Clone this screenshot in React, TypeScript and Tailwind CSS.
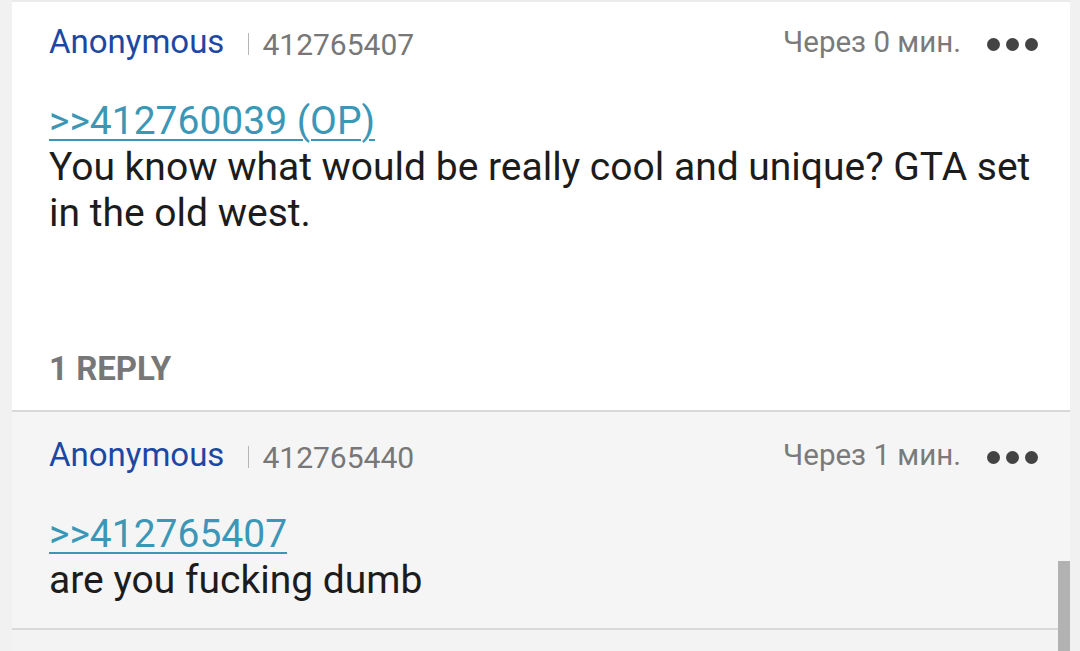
const posts = [
  {
    id: "412765407",
    time: "Через 0 мин.",
    quote: ">>412760039 (OP)",
    body: "You know what would be really cool and unique? GTA set in the old west.",
    replies: "1 REPLY",
    bg: "bg-white",
    pt: "pt-[20px]",
  },
  {
    id: "412765440",
    time: "Через 1 мин.",
    quote: ">>412765407",
    body: "are you fucking dumb",
    replies: "",
    bg: "bg-[#f5f5f5]",
    pt: "pt-[23px]",
  },
];

function Dots() {
  return (
    <div className="flex items-center gap-[6px] mt-[2px] h-[40px]">
      <span className="w-[13px] h-[13px] rounded-full bg-[#434343]" />
      <span className="w-[13px] h-[13px] rounded-full bg-[#434343]" />
      <span className="w-[13px] h-[13px] rounded-full bg-[#434343]" />
    </div>
  );
}

export default function App() {
  return (
    <div
      className="relative w-[1080px] h-[651px] overflow-hidden bg-[#f1f1f1] pl-[12px] pr-[10px]"
      style={{ fontFamily: "Roboto, 'Noto Sans', sans-serif" }}
    >
      <div className="w-[1058px] border-t-2 border-[#ebebeb]">
        {posts.map((p) => (
          <div
            key={p.id}
            className={`${p.bg} ${p.pt} pl-[37px] pr-[32px] border-b-2 border-[#d9d9d9]`}
          >
            <div className="flex items-start">
              <span className="text-[33px] leading-[40px] text-[#1c48a4]">Anonymous</span>
              <span className="ml-[24px] mt-[11px] w-px h-[22px] bg-[#b5b5b5]" />
              <span className="ml-[13px] mt-[3px] text-[30px] leading-[40px] text-[#777777]">
                {p.id}
              </span>
              <span className="ml-auto text-[29.5px] leading-[40px] text-[#7a7a7a]">{p.time}</span>
              <div className="ml-[26px]">
                <Dots />
              </div>
            </div>
            <div className="mt-[33px] text-[39px] leading-[46px] text-[#1c1c1c]">
              <a className="block text-[#3b97b5] underline underline-offset-[5px] decoration-2">
                {p.quote}
              </a>
              <p>{p.body}</p>
            </div>
            {p.replies ? (
              <div className="mt-[113px] pb-[21px] text-[33px] leading-[40px] font-bold text-[#777777]">
                {p.replies}
              </div>
            ) : (
              <div className="h-[25px]" />
            )}
          </div>
        ))}
        <div className="h-[40px] bg-[#f3f3f3]" />
      </div>
      <div className="absolute left-[1058px] top-[561px] w-[12px] h-[90px] bg-[#b2b2b2]" />
    </div>
  );
}
